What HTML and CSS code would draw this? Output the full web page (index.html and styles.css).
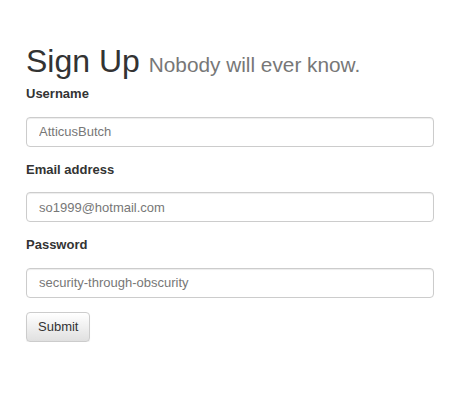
FILE: index.html
```html
<!DOCTYPE html>
<html>
<head>
<meta charset="utf-8">
<link rel="stylesheet" href="styles.css">
</head>
<body>
<div class="container">
  <h1 class="title">Sign Up <small class="subtitle">Nobody will ever know.</small></h1>
  <form class="form">
    <div class="form-group">
      <label class="label" for="u">Username</label>
      <input class="input" id="u" type="text" placeholder="AtticusButch">
    </div>
    <div class="form-group">
      <label class="label" for="e">Email address</label>
      <input class="input" id="e" type="text" placeholder="so1999@hotmail.com">
    </div>
    <div class="form-group">
      <label class="label" for="p">Password</label>
      <input class="input" id="p" type="text" placeholder="security-through-obscurity">
    </div>
    <button class="btn" type="button">Submit</button>
  </form>
</div>
</body>
</html>
```

FILE: styles.css
```css
* { box-sizing: border-box; }
html, body { margin: 0; padding: 0; background: #fff; }
body {
  font-family: "Liberation Sans", Arial, sans-serif;
  font-size: 13px;
  line-height: 1.42857;
  color: #333;
}
.container {
  width: 408px;
  margin-left: 26px;
  padding-top: 44px;
}
.title {
  margin: 0 0 6px 0;
  font-size: 32px;
  font-weight: 500;
  line-height: 1.1;
  color: #333;
}
.subtitle {
  font-size: 65%;
  font-weight: 400;
  color: #777;
}
.form { margin: 0; }
.form-group { margin-bottom: 14px; }
.label {
  display: block;
  font-weight: bold;
  margin-bottom: 13px;
  line-height: 18.57px;
}
.input {
  display: block;
  width: 100%;
  height: 30px;
  padding: 5px 12px;
  font-family: inherit;
  font-size: 13px;
  color: #555;
  background: #fff;
  border: 1px solid #ccc;
  border-radius: 4px;
  box-shadow: inset 0 1px 1px rgba(0,0,0,.075);
  outline: none;
}
.input::placeholder { color: #777; opacity: 1; }
.btn {
  display: inline-block;
  height: 30px;
  padding: 5px 11px;
  font-family: inherit;
  font-size: 13px;
  line-height: 18px;
  color: #333;
  background: linear-gradient(to bottom, #fff 0%, #e0e0e0 100%);
  border: 1px solid #ccc;
  border-radius: 4px;
  box-shadow: inset 0 1px 0 rgba(255,255,255,.15), 0 1px 1px rgba(0,0,0,.075);
  cursor: pointer;
}
```
